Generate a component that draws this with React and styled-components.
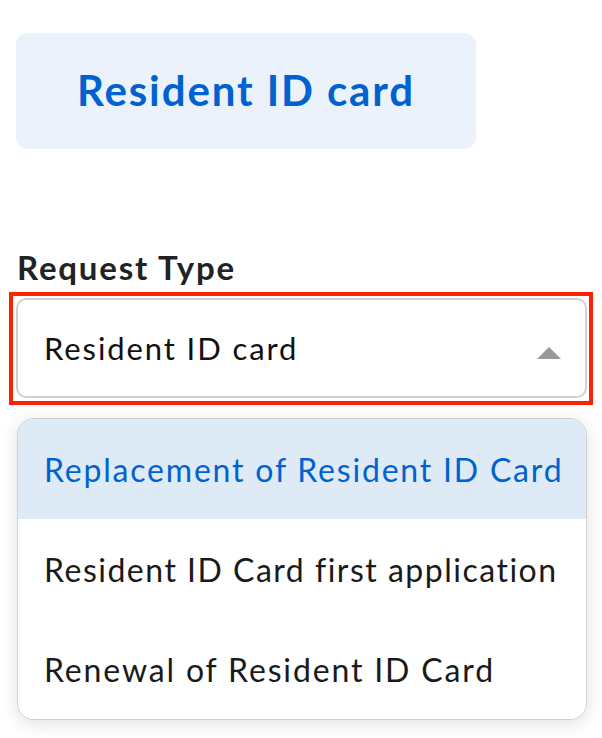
import React from "react";
import styled, { createGlobalStyle } from "styled-components";

const Global = createGlobalStyle`
  html, body { margin: 0; padding: 0; background: #ffffff; }
  body { font-family: "Lato", "Open Sans", sans-serif; -webkit-font-smoothing: antialiased; }
`;

const Page = styled.div`
  width: 602px;
  height: 738px;
  overflow: hidden;
  display: flex;
  flex-direction: column;
  padding-top: 33px;
  box-sizing: border-box;
`;

const TypeCard = styled.div`
  margin-left: 16px;
  width: 460px;
  height: 116px;
  box-sizing: border-box;
  border-radius: 12px;
  background: #ebf2fc;
  display: flex;
  align-items: center;
  justify-content: center;
  color: #0062d1;
  font-size: 42px;
  font-weight: 700;
  letter-spacing: 1.9px;
  padding-bottom: 2px;
`;

const Label = styled.div`
  margin: 100px 0 0 17px;
  font-size: 33px;
  font-weight: 700;
  letter-spacing: 1.8px;
  color: #222222;
  line-height: 36px;
  height: 36px;
`;

const Frame = styled.div`
  margin: 7px 9px 0 9px;
  border: 4px solid #ff2200;
  padding: 2px 2px 3px 3px;
`;

const Select = styled.div`
  height: 100px;
  box-sizing: border-box;
  border: 2px solid #d0d0d0;
  border-radius: 10px;
  display: flex;
  align-items: center;
  justify-content: space-between;
  padding: 0 24px 0 26px;
  font-size: 31px;
  letter-spacing: 1.9px;
  color: #111111;
`;

const Caret = styled.svg`
  width: 24px;
  height: 12px;
  margin-top: 10px;
`;

const Menu = styled.div`
  margin: 13px 15px 0 17px;
  border: 1.5px solid #cfcfcf;
  border-radius: 17px;
  overflow: hidden;
  box-shadow: 0 4px 18px rgba(0, 0, 0, 0.12);
  background: #ffffff;
`;

const Option = styled.div`
  height: 100px;
  display: flex;
  align-items: center;
  padding-left: 26px;
  font-size: 32px;
  letter-spacing: ${(p) => p.$ls}px;
  color: ${(p) => (p.$active ? "#0062d1" : "#1a1a1a")};
  background: ${(p) => (p.$active ? "#deebf7" : "#ffffff")};
`;

const options = [
  { text: "Replacement of Resident ID Card", ls: 1.8 },
  { text: "Resident ID Card first application", ls: 1.5 },
  { text: "Renewal of Resident ID Card", ls: 1.85 },
];

export default function App() {
  return (
    <>
      <Global />
      <Page>
        <TypeCard>Resident ID card</TypeCard>
        <Label>Request Type</Label>
        <Frame>
          <Select>
            <span>Resident ID card</span>
            <Caret viewBox="0 0 24 12">
              <path d="M12 0 L24 12 L0 12 Z" fill="#999999" />
            </Caret>
          </Select>
        </Frame>
        <Menu>
          {options.map((o, i) => (
            <Option key={o.text} $active={i === 0} $ls={o.ls}>
              {o.text}
            </Option>
          ))}
        </Menu>
      </Page>
    </>
  );
}
